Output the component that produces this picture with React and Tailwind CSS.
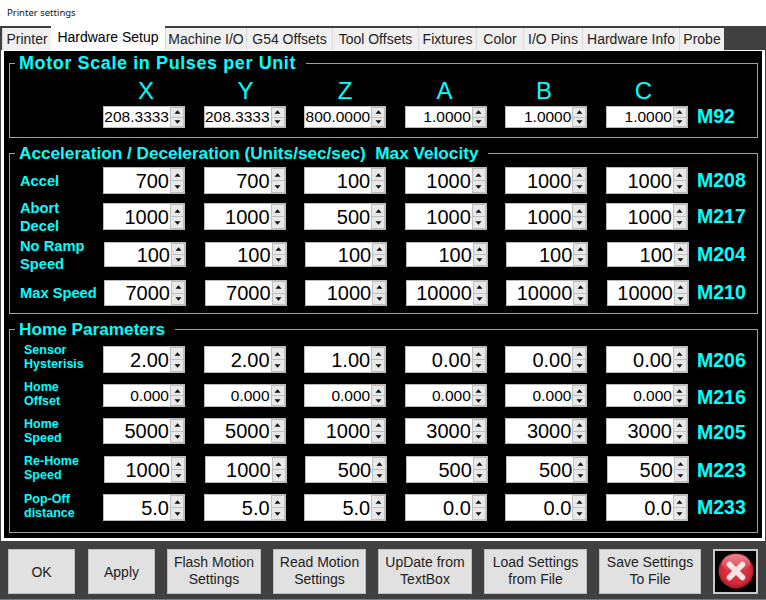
import React from "react";

const tabs = [
    ["Printer", "w-[49px]"],
    ["Hardware Setup", "w-[114px]"],
    ["Machine I/O", "w-[81px]"],
    ["G54 Offsets", "w-[86px]"],
    ["Tool Offsets", "w-[86px]"],
    ["Fixtures", "w-[58px]"],
    ["Color", "w-[47px]"],
    ["I/O Pins", "w-[59px]"],
    ["Hardware Info", "w-[97px]"],
    ["Probe", "w-[45px]"],
];

const accelRows = [
    { label: ["Accel"], mt: "mt-[4px]", h: "h-[27px]", code: "M208", vals: ["700", "700", "100", "1000", "1000", "1000"] },
    { label: ["Abort", "Decel"], mt: "mt-[9px]", h: "h-[27px]", code: "M217", vals: ["1000", "1000", "500", "1000", "1000", "1000"] },
    { label: ["No Ramp", "Speed"], mt: "mt-[12px]", h: "h-[25px]", code: "M204", nudge: true, vals: ["100", "100", "100", "100", "100", "100"] },
    { label: ["Max Speed"], mt: "mt-[13px]", h: "h-[26px]", code: "M210", nudge: true, vals: ["7000", "7000", "1000", "10000", "10000", "10000"] },
];

const homeRows = [
    { label: ["Sensor", "Hysterisis"], mt: "mt-[7px]", h: "h-[27px]", code: "M206", labelClass: "mb-[5px]", codeClass: "pt-[3px]", vals: ["2.00", "2.00", "1.00", "0.00", "0.00", "0.00"] },
    { label: ["Home", "Offset"], mt: "mt-[11px]", h: "h-[23px]", code: "M216", small: true, labelClass: "mb-[3px]", codeClass: "pt-[4px]", vals: ["0.000", "0.000", "0.000", "0.000", "0.000", "0.000"] },
    { label: ["Home", "Speed"], mt: "mt-[11px]", h: "h-[26px]", code: "M205", codeClass: "pt-[3px]", vals: ["5000", "5000", "1000", "3000", "3000", "3000"] },
    { label: ["Re-Home", "Speed"], mt: "mt-[12px]", h: "h-[27px]", code: "M223", nudge: true, labelClass: "mb-[3px]", codeClass: "pt-[3px]", vals: ["1000", "1000", "500", "500", "500", "500"] },
    { label: ["Pop-Off", "distance"], mt: "mt-[11px]", h: "h-[27px]", code: "M233", labelClass: "mb-[3px]", vals: ["5.0", "5.0", "5.0", "0.0", "0.0", "0.0"] },
];

const buttons = [
    ["OK", "w-[67px] pt-[3px]", "ml-0"],
    ["Apply", "w-[67px] pt-[3px]", "ml-[13px]"],
    ["Flash Motion Settings", "w-[94px]", "ml-[12px]"],
    ["Read Motion Settings", "w-[93px]", "ml-[12px]"],
    ["UpDate from TextBox", "w-[94px]", "ml-[12px]"],
    ["Load Settings from File", "w-[103px]", "ml-[12px]"],
    ["Save Settings To File", "w-[102px]", "ml-[12px]"],
];

function Spinner({ value, big }) {
    return (
        <div className="flex h-full w-[82px] shrink-0 border border-[#bcbcbc] bg-white">
            <div className={`flex flex-1 items-center justify-end pr-[1px] leading-none text-black ${big ? "text-[20px]" : "text-[15.5px]"}`}>{value}</div>
            <div className="flex w-[14px] flex-col">
                <div className="flex flex-1 items-center justify-center border border-[#c0c0c0] bg-[#e8e8e8]">
                    <svg width="7" height="4" viewBox="0 0 7 4"><path d="M3.5 0.3 L6.5 3.7 L0.5 3.7 Z" fill="#111" /></svg>
                </div>
                <div className="flex flex-1 items-center justify-center border border-t-0 border-[#c0c0c0] bg-[#e8e8e8]">
                    <svg width="7" height="4" viewBox="0 0 7 4"><path d="M0.5 0.3 L6.5 0.3 L3.5 3.7 Z" fill="#111" /></svg>
                </div>
            </div>
        </div>
    );
}

function Group({ title, titleClass, className, children }) {
    return (
        <fieldset className={`mx-[5px] w-[749px] border border-[#a0a0a0] p-0 ${className}`}>
            <legend className={`ml-[5px] pl-[4px] pr-[10px] font-bold leading-[20px] text-[#00ffff] ${titleClass}`}>{title}</legend>
            {children}
        </fieldset>
    );
}

function Row({ row, labelClass }) {
    return (
        <div className={`flex items-center ${row.mt} ${row.h}`}>
            <div className={`shrink-0 font-bold text-[#00ffff] ${row.nudge ? "w-[94px]" : "w-[93px]"} ${labelClass} ${row.labelClass || ""}`}>
                {row.label.map((l) => <div key={l}>{l}</div>)}
            </div>
            <div className="flex h-full gap-[18.6px]">
                {row.vals.map((v, i) => <Spinner key={i} value={v} big={!row.small} />)}
            </div>
            <div className={`text-[19.5px] font-bold text-[#00ffff] ${row.nudge ? "ml-[8px]" : "ml-[9px]"} ${row.codeClass || ""}`}>{row.code}</div>
        </div>
    );
}

export default function App() {
    return (
        <div className="flex h-[600px] w-[766px] flex-col overflow-hidden bg-[#404040] font-['Liberation_Sans',sans-serif]">
            {/* Title bar */}
            <div className="flex h-[26px] items-center bg-white pl-[7px] font-['Noto_Sans',sans-serif] text-[9.5px] text-[#111]">Printer settings</div>

            {/* Tabs */}
            <div className="flex h-[24px] items-end pl-[2px]">
                {tabs.map(([t, w], i) => (
                    <div
                        key={t}
                        className={`flex shrink-0 items-center justify-center text-[14px] ${w} ${i === 1 ? "h-[24px] bg-white pb-[1px] text-black" : "h-[22px] border-l border-[#d9d9d9] bg-[#f0f0f0] text-[#222]"}`}
                    >
                        {t}
                    </div>
                ))}
            </div>

            {/* Tab page */}
            <div className="mx-[1px] flex h-[491px] flex-col border-[3px] border-t-[1px] border-white bg-black pt-[2px]">
                <Group title="Motor Scale in Pulses per Unit" titleClass="text-[18px] tracking-[0.6px]" className="h-[85px]">
                    <div className="ml-[95px] flex h-[33px] gap-[17.5px] pt-[5px]">
                        {["X", "Y", "Z", "A", "B", "C"].map((a) => (
                            <div key={a} className="w-[82px] text-center text-[24px] leading-[26px] text-[#00ffff]">{a}</div>
                        ))}
                    </div>
                    <div className="flex h-[22px] items-center">
                        <div className="ml-[93px] flex h-full gap-[18.6px]">
                            {["208.3333", "208.3333", "800.0000", "1.0000", "1.0000", "1.0000"].map((v, i) => <Spinner key={i} value={v} />)}
                        </div>
                        <div className="ml-[9px] text-[19.5px] font-bold text-[#00ffff]">M92</div>
                    </div>
                </Group>

                <Group title={"Acceleration / Deceleration (Units/sec/sec)\u00a0\u00a0Max Velocity"} titleClass="text-[17.2px]" className="mt-[5px] h-[171px]">
                    {accelRows.map((r) => <Row key={r.code} row={r} labelClass="pl-[10px] text-[14.7px] leading-[18px]" />)}
                </Group>

                <Group title="Home Parameters" titleClass="text-[17.2px]" className="mt-[5px] h-[214px]">
                    {homeRows.map((r) => <Row key={r.code} row={r} labelClass="pl-[14px] text-[12.5px] leading-[14px]" />)}
                </Group>
            </div>

            {/* Bottom buttons */}
            <div className="flex h-[58px] items-center pl-[8px] pt-[2px]">
                {buttons.map(([t, w, ml]) => (
                    <div key={t} className={`flex h-[45px] shrink-0 items-center justify-center border border-[#c0c0c0] bg-[#e1e1e1] px-1 text-center text-[14px] leading-[17.5px] text-[#222] ${w} ${ml}`}>
                        {t}
                    </div>
                ))}
                <div className="ml-[12px] flex h-[45px] w-[45px] items-center justify-center border-2 border-[#c8c8c8] bg-black">
                    <svg width="36" height="36" viewBox="0 0 36 36">
                        <defs>
                            <radialGradient id="redBall" cx="50%" cy="45%" r="60%">
                                <stop offset="0%" stopColor="#e0404c" />
                                <stop offset="70%" stopColor="#d42a38" />
                                <stop offset="100%" stopColor="#8a0f1c" />
                            </radialGradient>
                            <linearGradient id="redShine" x1="0" y1="0" x2="0" y2="1">
                                <stop offset="0%" stopColor="#ffffff" stopOpacity="0.45" />
                                <stop offset="100%" stopColor="#ffffff" stopOpacity="0" />
                            </linearGradient>
                        </defs>
                        <circle cx="18" cy="18" r="17.5" fill="url(#redBall)" />
                        <ellipse cx="18" cy="10" rx="14" ry="9" fill="url(#redShine)" />
                        <path d="M11.5 11.5 L24.5 24.5 M24.5 11.5 L11.5 24.5" stroke="#f8e4e6" strokeWidth="5.5" strokeLinecap="round" />
                    </svg>
                </div>
            </div>

            <div className="h-[1px] bg-[#2b8fd6]" />
        </div>
    );
}
